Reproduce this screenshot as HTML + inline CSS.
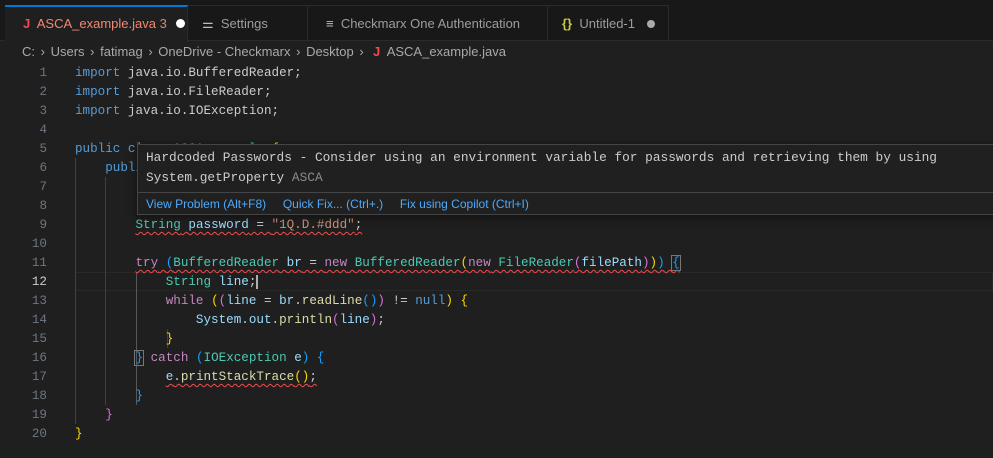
<!DOCTYPE html>
<html><head><meta charset="utf-8"><style>
*{margin:0;padding:0;box-sizing:border-box}
body{width:993px;height:458px;background:#1f1f1f;overflow:hidden;position:relative;font-family:"Liberation Sans",sans-serif}
.tabs{position:absolute;left:0;top:0;width:993px;height:41px;background:#181818;border-bottom:1px solid #2b2b2b}
.tab{position:absolute;top:5px;height:36px;border-right:1px solid #2b2b2b;border-top:1px solid #2b2b2b;color:#9d9d9d;font-size:13px;line-height:35px;padding-left:12px;white-space:nowrap}
.tab.act{background:#1f1f1f;color:#f48771;border-top:2px solid #0078d4;line-height:33px;height:37px}
.bc{position:absolute;top:41px;left:22px;font-size:13px;color:#a9a9a9;line-height:22px;white-space:nowrap}
.bc i{font-style:normal;margin:0 2px}
.ln{position:absolute;left:0;width:47px;text-align:right;color:#6e7681;font:12.6px/19px "Liberation Mono",monospace}
.code{position:absolute;left:75px;font:12.6px/19px "Liberation Mono",monospace;color:#cccccc;white-space:pre}
.k{color:#569cd6}.c{color:#c586c0}.t{color:#4ec9b0}.v{color:#9cdcfe}.s{color:#ce9178}.f{color:#dcdcaa}
.g{color:#ffd700}.p{color:#da70d6}.b{color:#179fff}
.sq{text-decoration:underline wavy #f14c4c;text-decoration-thickness:1px;text-underline-offset:3px}
.guide{position:absolute;width:1px;background:#404040}
.tip{position:absolute;left:137px;top:144px;width:870px;height:71px;background:#202020;border:1px solid #454545;box-shadow:0 2px 8px rgba(0,0,0,.5)}
.tip .m{position:absolute;left:8px;top:3px;font:12.8px/20px "Liberation Mono",monospace;color:#cccccc;white-space:pre}
.tip .a{position:absolute;left:0;top:47px;width:100%;height:23px;border-top:1px solid #454545;font-size:12px;line-height:22px;color:#4daafc;padding-left:8px;white-space:nowrap}
</style></head><body>
<div class="tabs">
<div class="tab act" style="left:5px;width:183px;padding-left:18px"><span style="color:#f14c4c;font-weight:bold">J</span>&nbsp; ASCA_example.java <span style="color:#d48a74">3</span> <span style="display:inline-block;width:9px;height:9px;border-radius:50%;background:#fff;margin-left:6px"></span></div>
<div class="tab" style="left:188px;width:120px;padding-left:14px"><span style="color:#bbb">⚌</span>&nbsp; Settings</div>
<div class="tab" style="left:308px;width:240px;padding-left:18px"><span style="color:#bbb">≡</span>&nbsp; Checkmarx One Authentication</div>
<div class="tab" style="left:548px;width:121px;padding-left:14px"><span style="color:#cbcb41;font-weight:bold">{}</span>&nbsp; Untitled-1 <span style="display:inline-block;width:8px;height:8px;border-radius:50%;background:#aaa;margin-left:8px"></span></div>
</div>
<div class="bc">C: <i>›</i> Users <i>›</i> fatimag <i>›</i> OneDrive - Checkmarx <i>›</i> Desktop <i>›</i> &nbsp;<span style="color:#f14c4c;font-weight:bold">J</span>&nbsp; ASCA_example.java</div>

<div style="position:absolute;left:75px;top:272px;width:918px;height:19px;border:1px solid #282828"></div>

<div class="guide" style="left:75px;top:158px;height:266px"></div>
<div class="guide" style="left:105px;top:177px;height:228px"></div>
<div class="guide" style="left:136px;top:272px;height:133px;background:#585858"></div>
<div class="guide" style="left:167px;top:329px;height:19px"></div>

<div class="ln" style="top:64px">1<br>2<br>3<br>4<br>5<br>6<br>7<br>8<br>9<br>10<br>11<br><span style="color:#ccc">12</span><br>13<br>14<br>15<br>16<br>17<br>18<br>19<br>20</div>
<div class="code" style="top:64px"><span class="k">import</span> java.io.BufferedReader;
<span class="k">import</span> java.io.FileReader;
<span class="k">import</span> java.io.IOException;

<span class="k">public</span> <span class="k">class</span> <span class="t">ASCA_example</span> <span class="g">{</span>
    <span class="k">public</span> <span class="k">static</span> <span class="k">void</span> <span class="f">main</span><span class="p">(</span><span class="t">String</span>[] <span class="v">args</span><span class="p">)</span> <span class="p">{</span>


        <span class="sq"><span class="t">String</span> <span class="v">password</span> = <span class="s">"1Q.D.#ddd"</span>;</span>

        <span class="sq"><span class="c">try</span> <span class="b">(</span><span class="t">BufferedReader</span> <span class="v">br</span> = <span class="c">new</span> <span class="t">BufferedReader</span><span class="g">(</span><span class="c">new</span> <span class="t">FileReader</span><span class="p">(</span><span class="v">filePath</span><span class="p">)</span><span class="g">)</span><span class="b">)</span> <span class="b" style="outline:1px solid #777">{</span></span>
            <span class="t">String</span> <span class="v">line</span>;<span style="border-left:2px solid #aeafad"></span>
            <span class="c">while</span> <span class="g">(</span><span class="p">(</span><span class="v">line</span> = <span class="v">br</span>.<span class="f">readLine</span><span class="b">()</span><span class="p">)</span> != <span class="k">null</span><span class="g">)</span> <span class="g">{</span>
                <span class="v">System</span>.<span class="v">out</span>.<span class="f">println</span><span class="p">(</span><span class="v">line</span><span class="p">)</span>;
            <span class="g">}</span>
        <span class="b" style="outline:1px solid #777">}</span> <span class="c">catch</span> <span class="b">(</span><span class="t">IOException</span> <span class="v">e</span><span class="b">)</span> <span class="b">{</span>
            <span class="sq"><span class="v">e</span>.<span class="f">printStackTrace</span><span class="g">()</span>;</span>
        <span class="b">}</span>
    <span class="p">}</span>
<span class="g">}</span></div>

<div class="tip">
<div class="m">Hardcoded Passwords - Consider using an environment variable for passwords and retrieving them by using
System.getProperty <span style="color:#8b8b8b">ASCA</span></div>
<div class="a">View Problem (Alt+F8) &nbsp;&nbsp;&nbsp; Quick Fix... (Ctrl+.) &nbsp;&nbsp;&nbsp; Fix using Copilot (Ctrl+I)</div>
</div>
</body></html>
